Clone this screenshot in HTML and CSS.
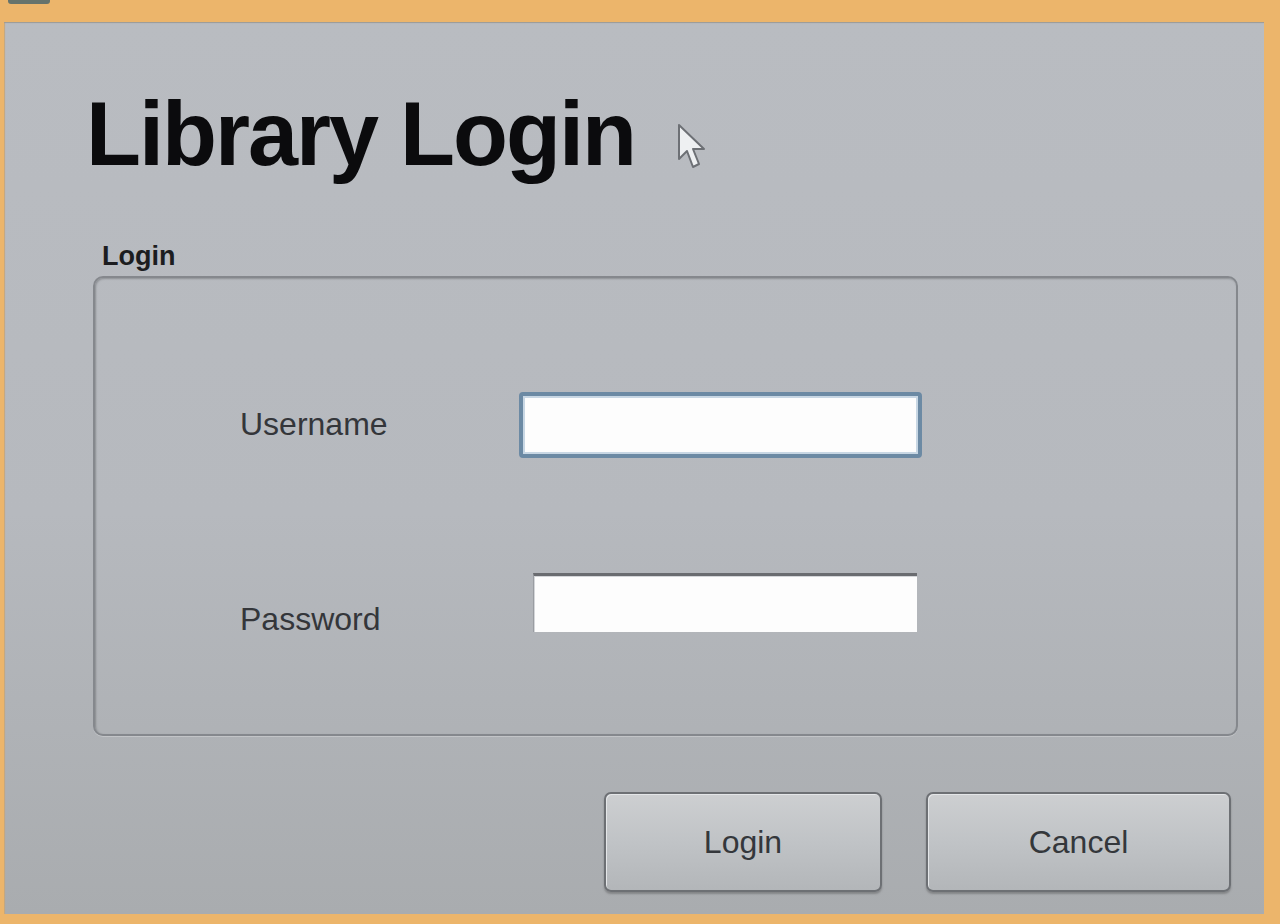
FILE: index.html
```html
<!DOCTYPE html>
<html lang="en">
<head>
<meta charset="utf-8">
<title>Library Login</title>
<link rel="stylesheet" href="styles.css">
</head>
<body>
<div class="frame">
  <div class="title-icon"></div>
  <main class="panel">
    <div class="title-row">
      <h1 class="title">Library Login</h1>
      <svg class="cursor" width="30" height="50" viewBox="0 0 30 50" aria-hidden="true">
        <path d="M2 2 L2 36 L10 28 L16 44 L22 41 L16 26 L27 26 Z" fill="#eef0f2" stroke="#6d7075" stroke-width="2" stroke-linejoin="round"/>
      </svg>
    </div>
    <div class="group-label">Login</div>
    <section class="group">
      <div class="row row-user">
        <label class="field-label label-user" for="user">Username</label>
        <input id="user" class="input input-user" type="text">
      </div>
      <div class="row row-pass">
        <label class="field-label label-pass" for="pass">Password</label>
        <input id="pass" class="input input-pass" type="password">
      </div>
    </section>
    <div class="actions">
      <button class="btn btn-login" type="button">Login</button>
      <button class="btn btn-cancel" type="button">Cancel</button>
    </div>
  </main>
</div>
</body>
</html>
```

FILE: styles.css
```css
html, body {
  margin: 0;
  padding: 0;
}

body {
  width: 1280px;
  height: 924px;
  overflow: hidden;
  background: #ecb56b;
  font-family: "Liberation Sans", Arial, sans-serif;
}

.frame {
  position: relative;
  box-sizing: border-box;
  width: 1280px;
  height: 924px;
  padding: 22px 16px 10px 4px;
}

.title-icon {
  position: absolute;
  left: 8px;
  top: 0;
  width: 42px;
  height: 4px;
  border-radius: 0 0 3px 3px;
  background: #66736c;
}

.panel {
  box-sizing: border-box;
  width: 1260px;
  height: 892px;
  display: flex;
  flex-direction: column;
  background: linear-gradient(180deg, #b9bcc1 0%, #b6b9be 55%, #a9acaf 100%);
  box-shadow: inset 0 2px 1px -1px #9c9a95, inset 2px 0 1px -1px #c7a77a;
}

.title-row {
  display: flex;
  align-items: flex-start;
  margin-top: 67px;
  margin-left: 82px;
  height: 90px;
}

.title {
  margin: 0;
  font-size: 90px;
  line-height: 1;
  font-weight: 700;
  letter-spacing: -2px;
  color: #0b0b0d;
}

.cursor {
  margin-left: 42px;
  margin-top: 34px;
}

.group-label {
  margin-top: 64px;
  margin-left: 98px;
  font-size: 27px;
  line-height: 1;
  font-weight: 700;
  color: #1c1d20;
  height: 27px;
}

.group {
  box-sizing: border-box;
  margin: 6px 26px 0 89px;
  height: 460px;
  border: 2px solid #85888d;
  border-radius: 10px;
  box-shadow: inset 1px 1px 2px rgba(60, 62, 66, 0.35), 0 1px 0 rgba(255, 255, 255, 0.25);
  padding: 114px 0 0 145px;
  display: flex;
  flex-direction: column;
  gap: 115px;
}

.row {
  display: flex;
  align-items: flex-start;
}

.field-label {
  font-size: 32px;
  line-height: 1;
  color: #34363a;
}

.label-user {
  width: 279px;
  margin-top: 16px;
}

.label-pass {
  width: 293px;
  margin-top: 30px;
}

.input {
  box-sizing: border-box;
  margin: 0;
  padding: 0 8px;
  background: #fdfdfd;
  font-size: 24px;
  outline: none;
}

.input-user {
  width: 403px;
  height: 66px;
  border: 4px solid #6c8aa4;
  border-radius: 4px;
  box-shadow: inset 0 0 0 2px #c8d7e4;
}

.input-pass {
  width: 384px;
  height: 59px;
  border: none;
  border-top: 3px solid #6a6c70;
  border-left: 1px solid #9a9da2;
  box-shadow: inset 1px 1px 0 #d4d6d9;
}

.actions {
  display: flex;
  justify-content: flex-end;
  gap: 44px;
  margin-top: 56px;
  margin-right: 33px;
}

.btn {
  box-sizing: border-box;
  height: 100px;
  border: 2px solid #6d7074;
  border-radius: 7px;
  background: linear-gradient(180deg, #cdcfd1 0%, #c0c3c6 50%, #b3b6b9 100%);
  box-shadow: inset 1px 1px 0 #e4e6e8, 0 2px 2px rgba(60, 60, 60, 0.35);
  font-family: "Liberation Sans", Arial, sans-serif;
  font-size: 32px;
  color: #34373b;
  padding: 0;
  cursor: pointer;
}

.btn-login {
  width: 278px;
}

.btn-cancel {
  width: 305px;
}
```
